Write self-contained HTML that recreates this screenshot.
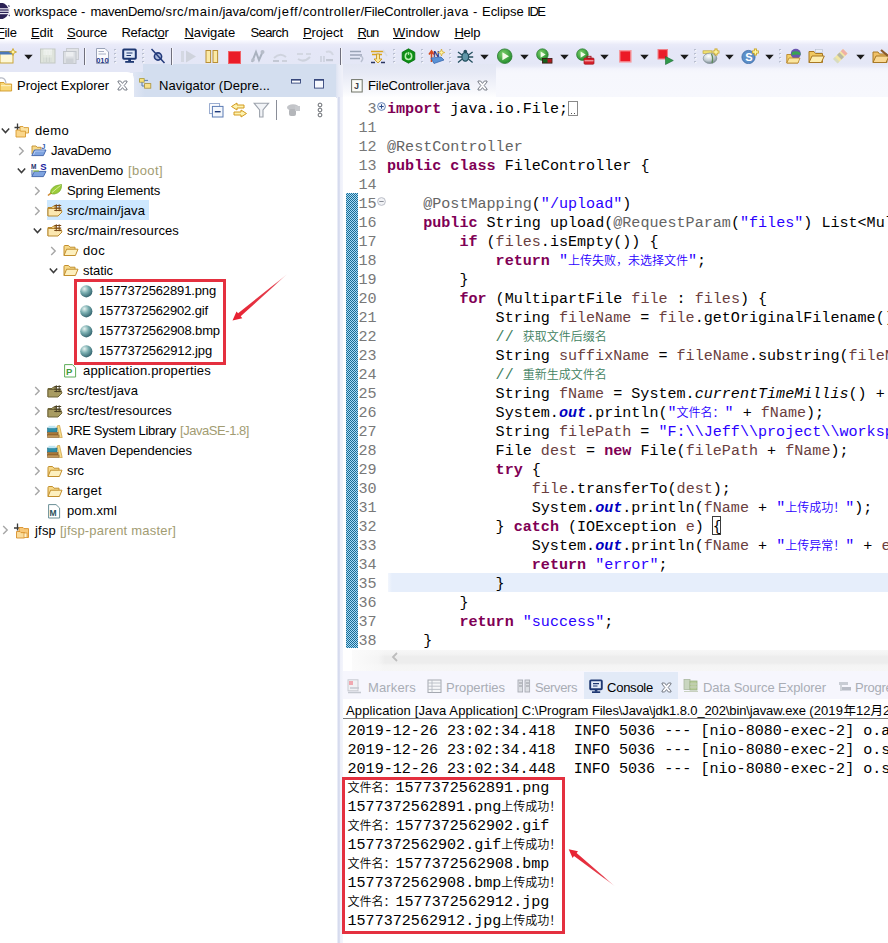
<!DOCTYPE html>
<html lang="zh"><head><meta charset="utf-8"><title>workspace - Eclipse IDE</title>
<style>
html,body{margin:0;padding:0;background:#fff;}
#root{position:relative;width:888px;height:943px;overflow:hidden;background:#fff;font-family:"Liberation Sans","Noto Sans CJK SC",sans-serif;}
.t{position:absolute;white-space:pre;line-height:20px;height:20px;}
.b{position:absolute;display:block;}
.m{font-family:"Liberation Mono","Noto Sans CJK SC",monospace;font-size:15.08px;}
.c{line-height:12px;font-weight:350;font-family:"Liberation Mono","Noto Sans CJK SC",monospace;font-size:12px;}
.cl{position:absolute;left:387px;white-space:pre;height:19px;line-height:19px;color:#000;}
.ln{position:absolute;left:340px;width:36.5px;text-align:right;white-space:pre;height:19px;line-height:19px;color:#787878;}
.k{color:#7f0055;font-weight:bold;}
.s{color:#2a00ff;}
.a{color:#646464;}
.v{color:#6a3e3e;}
.cm{color:#3f7f5f;}
.sf{color:#0000c0;font-style:italic;font-weight:bold;}
.si{font-style:italic;}
u{text-decoration:underline;}
</style></head>
<body>
<div id="root">
<div class="b" style="left:0px;top:40px;width:888px;height:25px;background:linear-gradient(#fbfbff,#eaebf9 18%,#e5e7f7 36%,#e4e7f6);"></div>
<div class="b" style="left:0px;top:64px;width:143px;height:9px;background:#e4e7f6;"></div>
<div class="b" style="left:143px;top:64px;width:193px;height:33px;background:#d3deef;"></div>
<div class="b" style="left:133px;top:72px;width:12px;height:25px;background:linear-gradient(90deg,#e0e6f4,#d3deef);"></div>
<div class="b" style="left:0px;top:72px;width:134px;height:26px;background:#fff;border-radius:0 7px 0 0;"></div>
<div class="b" style="left:0px;top:97px;width:336px;height:846px;background:#fff;"></div>
<div class="b" style="left:336px;top:64px;width:7px;height:34px;background:linear-gradient(90deg,#dde3f2,#e9ecf7 40%,#f1f2fa);"></div>
<div class="b" style="left:337px;top:97px;width:6px;height:846px;background:linear-gradient(90deg,#f4f5fb 0,#d6dbee 1.5px,#dde1f1 3px,#eef0f9 3.5px,#f4f5fc);"></div>
<div class="b" style="left:343px;top:64px;width:545px;height:33px;background:linear-gradient(#e5e8f6 0,#e8eaf7 2px,#f3f4fc 5px,#f6f7fd 9px,#f7f8fd);"></div>
<div class="b" style="left:343px;top:64px;width:153px;height:34px;background:linear-gradient(#e2e6f3,#e6e9f5 25%,#f7f8fc 80%,#fff);"></div>
<div class="b" style="left:343px;top:97px;width:545px;height:568px;background:#fff;"></div>
<div class="b" style="left:343px;top:671px;width:545px;height:272px;background:#fff;"></div>
<div class="b" style="left:343px;top:671px;width:545px;height:28px;background:#f6f6fd;"></div>
<div class="b" style="left:584px;top:672px;width:94px;height:27px;background:#e2eaf7;"></div>
<div class="t" style="left:14px;top:2px;font-size:13px;color:#000;letter-spacing:0.125px;">workspace </div>
<div class="t" style="left:81px;top:2px;font-size:13px;color:#000;letter-spacing:0.779px;">- </div>
<div class="t" style="left:90.5px;top:2px;font-size:13px;color:#000;letter-spacing:-0.300px;">mavenDemo</div>
<div class="t" style="left:161.5px;top:2px;font-size:13px;color:#000;letter-spacing:0.390px;">/src</div>
<div class="t" style="left:184px;top:2px;font-size:13px;color:#000;letter-spacing:0.642px;">/main</div>
<div class="t" style="left:219px;top:2px;font-size:13px;color:#000;letter-spacing:-0.092px;">/java</div>
<div class="t" style="left:246px;top:2px;font-size:13px;color:#000;letter-spacing:-0.143px;">/com</div>
<div class="t" style="left:273.6px;top:2px;font-size:13px;color:#000;letter-spacing:0.856px;">/jeff</div>
<div class="t" style="left:298.6px;top:2px;font-size:13px;color:#000;letter-spacing:0.429px;">/controller</div>
<div class="t" style="left:360.4px;top:2px;font-size:13px;color:#000;letter-spacing:-0.121px;">/FileController</div>
<div class="t" style="left:439.5px;top:2px;font-size:13px;color:#000;letter-spacing:0.405px;">.java </div>
<div class="t" style="left:473px;top:2px;font-size:13px;color:#000;letter-spacing:0.529px;">- </div>
<div class="t" style="left:482px;top:2px;font-size:13px;color:#000;letter-spacing:-0.028px;">Eclipse </div>
<div class="t" style="left:527.3px;top:2px;font-size:13px;color:#000;letter-spacing:-1.491px;">IDE</div>
<div class="t" style="left:-3px;top:23px;font-size:13px;color:#000;letter-spacing:-0.362px;"><u>F</u>ile</div>
<div class="t" style="left:31px;top:23px;font-size:13px;color:#000;letter-spacing:-0.101px;"><u>E</u>dit</div>
<div class="t" style="left:67px;top:23px;font-size:13px;color:#000;letter-spacing:-0.199px;"><u>S</u>ource</div>
<div class="t" style="left:121.4px;top:23px;font-size:13px;color:#000;letter-spacing:-0.229px;">Refact<u>o</u>r</div>
<div class="t" style="left:184.5px;top:23px;font-size:13px;color:#000;letter-spacing:-0.101px;"><u>N</u>avigate</div>
<div class="t" style="left:250.5px;top:23px;font-size:13px;color:#000;letter-spacing:-0.616px;">Search</div>
<div class="t" style="left:303px;top:23px;font-size:13px;color:#000;letter-spacing:-0.066px;"><u>P</u>roject</div>
<div class="t" style="left:357.6px;top:23px;font-size:13px;color:#000;letter-spacing:-1.050px;"><u>R</u>un</div>
<div class="t" style="left:393px;top:23px;font-size:13px;color:#000;letter-spacing:0.094px;"><u>W</u>indow</div>
<div class="t" style="left:454.4px;top:23px;font-size:13px;color:#000;letter-spacing:-0.210px;"><u>H</u>elp</div>
<div class="t" style="left:17px;top:76px;font-size:13px;color:#000;letter-spacing:-0.030px;">Project Explorer</div>
<div class="t" style="left:159px;top:76px;font-size:13px;color:#000;letter-spacing:0.062px;">Navigator (Depre...</div>
<div class="b" style="left:47px;top:200px;width:102px;height:20px;background:#cde8ff;"></div>
<div class="t" style="left:35px;top:121px;font-size:13px;color:#000;letter-spacing:0.370px;">demo</div>
<div class="t" style="left:51px;top:141px;font-size:13px;color:#000;letter-spacing:-0.268px;">JavaDemo</div>
<div class="t" style="left:51px;top:161px;font-size:13px;color:#000;letter-spacing:-0.189px;">mavenDemo</div>
<div class="t" style="left:128px;top:161px;font-size:13px;color:#a29c72;letter-spacing:0.412px;">[boot]</div>
<div class="t" style="left:67px;top:181px;font-size:13px;color:#000;letter-spacing:-0.159px;">Spring Elements</div>
<div class="t" style="left:67px;top:201px;font-size:13px;color:#000;letter-spacing:0.109px;">src/main/java</div>
<div class="t" style="left:67px;top:221px;font-size:13px;color:#000;letter-spacing:0.121px;">src/main/resources</div>
<div class="t" style="left:83px;top:241px;font-size:13px;color:#000;letter-spacing:0.346px;">doc</div>
<div class="t" style="left:83px;top:261px;font-size:13px;color:#000;letter-spacing:-0.057px;">static</div>
<div class="t" style="left:99px;top:281px;font-size:13px;color:#000;letter-spacing:-0.135px;">1577372562891.png</div>
<div class="t" style="left:99px;top:301px;font-size:13px;color:#000;letter-spacing:-0.138px;">1577372562902.gif</div>
<div class="t" style="left:99px;top:321px;font-size:13px;color:#000;letter-spacing:-0.112px;">1577372562908.bmp</div>
<div class="t" style="left:99px;top:341px;font-size:13px;color:#000;letter-spacing:-0.115px;">1577372562912.jpg</div>
<div class="t" style="left:83px;top:361px;font-size:13px;color:#000;letter-spacing:0.201px;">application.properties</div>
<div class="t" style="left:67px;top:381px;font-size:13px;color:#000;letter-spacing:0.127px;">src/test/java</div>
<div class="t" style="left:67px;top:401px;font-size:13px;color:#000;letter-spacing:0.134px;">src/test/resources</div>
<div class="t" style="left:67px;top:421px;font-size:13px;color:#000;letter-spacing:-0.326px;">JRE System Library</div>
<div class="t" style="left:180px;top:421px;font-size:13px;color:#a29c72;letter-spacing:-0.452px;">[JavaSE-1.8]</div>
<div class="t" style="left:67px;top:441px;font-size:13px;color:#000;letter-spacing:-0.042px;">Maven Dependencies</div>
<div class="t" style="left:67px;top:461px;font-size:13px;color:#000;letter-spacing:-0.110px;">src</div>
<div class="t" style="left:67px;top:481px;font-size:13px;color:#000;letter-spacing:0.293px;">target</div>
<div class="t" style="left:67px;top:501px;font-size:13px;color:#000;letter-spacing:0.126px;">pom.xml</div>
<div class="t" style="left:35px;top:521px;font-size:13px;color:#000;letter-spacing:0.192px;">jfsp</div>
<div class="t" style="left:60px;top:521px;font-size:13px;color:#a29c72;letter-spacing:0.200px;">[jfsp-parent master]</div>
<svg class="b" style="left:0px;top:3px" width="10" height="16" viewBox="0 0 10 16"><circle cx="0.5" cy="8" r="8.3" fill="#2c2255"/><rect x="0" y="5.2" width="10" height="1.2" fill="#e8e6f0"/><rect x="0" y="7.6" width="10" height="1.2" fill="#e8e6f0"/><rect x="0" y="10" width="10" height="1.2" fill="#e8e6f0"/><path d="M8.2 2.5 L9.6 3.5 M8.8 13 L9.8 12" stroke="#55507a" stroke-width="1.2"/></svg>
<svg class="b" style="left:0px;top:48px" width="17" height="16" viewBox="0 0 17 16"><rect x="0" y="3.5" width="13" height="11.5" fill="#fdf8d8" stroke="#c9a63a" stroke-width="1"/><rect x="0" y="3.5" width="13" height="3" fill="#4b78b8"/><path d="M13 0.5 L14 3 L16.5 4 L14 5 L13 7.5 L12 5 L9.5 4 L12 3 Z" fill="#fff6a0" stroke="#c9a020" stroke-width="0.8"/></svg>
<svg class="b" style="left:23.5px;top:54px" width="9" height="6" viewBox="0 0 9 6"><polygon points="0.3,0.8 8.7,0.8 4.5,5.4" fill="#1a1a1a"/></svg>
<svg class="b" style="left:40px;top:48px" width="16" height="16" viewBox="0 0 16 16"><rect x="0.5" y="1" width="14.5" height="14" fill="#dfe4dc" stroke="#c3c9c4"/><rect x="3.5" y="1.5" width="8.5" height="5.5" fill="#eef1ee"/><rect x="3.5" y="9.5" width="8.5" height="5.5" fill="#cfd5d0"/><path d="M5 3 V14 M8 3 V14 M11 3 V14" stroke="#e7ece6" stroke-width="1"/></svg>
<svg class="b" style="left:63px;top:48px" width="18" height="16" viewBox="0 0 18 16"><rect x="3.5" y="0.5" width="12" height="11" fill="#e1e3e6" stroke="#c9ccd2"/><rect x="0.5" y="3.5" width="12.5" height="12" fill="#dcdfe3" stroke="#c2c6cc"/><rect x="3" y="4" width="7.5" height="4.5" fill="#eceef0"/><rect x="3" y="10.5" width="7.5" height="5" fill="#cdd1d6"/></svg>
<div class="b" style="left:84px;top:48px;width:1px;height:17px;background:#6f6f7c;"></div>
<div class="b" style="left:85px;top:48px;width:1px;height:17px;background:#f7f7fc;"></div>
<svg class="b" style="left:95px;top:48px" width="16" height="16" viewBox="0 0 16 16"><path d="M1.5 0.5 H10 L13.5 4 V15.5 H1.5 Z" fill="#fbfbfd" stroke="#9aa3b8"/><path d="M3.5 3.5 H9 M3.5 6 H11" stroke="#a8b0c4"/><text x="1.2" y="14.6" font-family="Liberation Sans,sans-serif" font-size="7.5" font-weight="bold" fill="#273a8a">010</text></svg>
<svg class="b" style="left:114px;top:48px" width="3" height="16" viewBox="0 0 3 16"><rect x="0" y="1" width="2" height="1.5" fill="#b9bfd0"/><rect x="1" y="2.2" width="1.5" height="1" fill="#fff"/><rect x="0" y="5" width="2" height="1.5" fill="#b9bfd0"/><rect x="1" y="6.2" width="1.5" height="1" fill="#fff"/><rect x="0" y="9" width="2" height="1.5" fill="#b9bfd0"/><rect x="1" y="10.2" width="1.5" height="1" fill="#fff"/><rect x="0" y="13" width="2" height="1.5" fill="#b9bfd0"/><rect x="1" y="14.2" width="1.5" height="1" fill="#fff"/></svg>
<svg class="b" style="left:122px;top:48px" width="15" height="16" viewBox="0 0 15 16"><rect x="1.2" y="1.6" width="12.6" height="9.2" rx="0.8" fill="#dfe9f8" stroke="#1e3872" stroke-width="2"/><path d="M4.5 5 H10.5 M4.5 7.5 H9" stroke="#1e3872" stroke-width="1.2"/><rect x="6.2" y="11" width="2.8" height="2.5" fill="#1e3872"/><rect x="3.2" y="13" width="8.8" height="1.8" fill="#1e3872"/></svg>
<svg class="b" style="left:142px;top:48px" width="3" height="16" viewBox="0 0 3 16"><rect x="0" y="1" width="2" height="1.5" fill="#b9bfd0"/><rect x="1" y="2.2" width="1.5" height="1" fill="#fff"/><rect x="0" y="5" width="2" height="1.5" fill="#b9bfd0"/><rect x="1" y="6.2" width="1.5" height="1" fill="#fff"/><rect x="0" y="9" width="2" height="1.5" fill="#b9bfd0"/><rect x="1" y="10.2" width="1.5" height="1" fill="#fff"/><rect x="0" y="13" width="2" height="1.5" fill="#b9bfd0"/><rect x="1" y="14.2" width="1.5" height="1" fill="#fff"/></svg>
<svg class="b" style="left:150px;top:48px" width="16" height="16" viewBox="0 0 16 16"><circle cx="8" cy="8.5" r="3.6" fill="#aab9dc" stroke="#22397a" stroke-width="1.6"/><path d="M1.5 1 L14.5 15" stroke="#22397a" stroke-width="1.5"/></svg>
<div class="b" style="left:171px;top:48px;width:1px;height:17px;background:#6f6f7c;"></div>
<div class="b" style="left:172px;top:48px;width:1px;height:17px;background:#f7f7fc;"></div>
<svg class="b" style="left:178px;top:48px" width="19" height="16" viewBox="0 0 19 16"><rect x="3" y="3" width="3" height="11" fill="#d4d8e2"/><polygon points="8,2.5 18,8.5 8,14.5" fill="#cfd3dc"/></svg>
<svg class="b" style="left:205px;top:48px" width="14" height="16" viewBox="0 0 14 16"><rect x="1" y="2.5" width="4.6" height="12" fill="#fbe9a6" stroke="#b98f34"/><rect x="8" y="2.5" width="4.6" height="12" fill="#fbe9a6" stroke="#b98f34"/></svg>
<svg class="b" style="left:228px;top:48px" width="14" height="16" viewBox="0 0 14 16"><rect x="0.5" y="3.5" width="12" height="12" fill="#ea1c28" stroke="#f0646a"/></svg>
<svg class="b" style="left:250px;top:48px" width="16" height="16" viewBox="0 0 16 16"><path d="M2 14 L6 4 L9 12 L13 3" stroke="#aab2bf" stroke-width="2" fill="none"/><circle cx="12.5" cy="4" r="2" fill="#b7bdc9"/><circle cx="3" cy="12" r="1.8" fill="#b7bdc9"/></svg>
<svg class="b" style="left:272px;top:48px" width="18" height="16" viewBox="0 0 18 16"><path d="M2 10 Q8 4 14 9" stroke="#cfd3de" stroke-width="2" fill="none"/><rect x="1" y="12" width="6" height="2" fill="#c3c8d4"/><rect x="10" y="12" width="5" height="2" fill="#cdd1dc"/></svg>
<svg class="b" style="left:295px;top:48px" width="18" height="16" viewBox="0 0 18 16"><path d="M2 6 H8 M11 6 H16" stroke="#d3d7e2" stroke-width="2"/><path d="M3 11 Q9 15 15 9" stroke="#cdd2dd" stroke-width="2" fill="none"/></svg>
<svg class="b" style="left:318px;top:48px" width="18" height="16" viewBox="0 0 18 16"><path d="M8 4 Q13 2 15 7" stroke="#d3d7e2" stroke-width="2" fill="none"/><path d="M3 8 V14 M6 8 V14" stroke="#c6cbd8" stroke-width="1.3"/><rect x="8" y="11" width="7" height="2.2" fill="#c3c8d4"/></svg>
<div class="b" style="left:340px;top:48px;width:1px;height:17px;background:#6f6f7c;"></div>
<div class="b" style="left:341px;top:48px;width:1px;height:17px;background:#f7f7fc;"></div>
<svg class="b" style="left:348px;top:48px" width="18" height="16" viewBox="0 0 18 16"><path d="M2 3.5 H13 M2 7 H14 M2 10.5 H12" stroke="#9aa3b6" stroke-width="1.6"/><path d="M12 8 Q17 9 13 14" stroke="#b9c0d0" stroke-width="1.5" fill="none"/></svg>
<svg class="b" style="left:370px;top:48px" width="19" height="16" viewBox="0 0 19 16"><path d="M1 3.5 H14 M2 6.5 H12" stroke="#d9a520" stroke-width="1.5"/><path d="M6.5 6 V11 H4 L8 15 L12 11 H9.5 V6 Z" fill="#fbe9a0" stroke="#c9961e" stroke-width="0.9"/><path d="M1 14.5 H5 M11 14.5 H15" stroke="#2a3560" stroke-width="1.6"/><path d="M13 2 L17 8" stroke="#d8dce6" stroke-width="1.5"/></svg>
<svg class="b" style="left:393px;top:48px" width="3" height="16" viewBox="0 0 3 16"><rect x="0" y="1" width="2" height="1.5" fill="#b9bfd0"/><rect x="1" y="2.2" width="1.5" height="1" fill="#fff"/><rect x="0" y="5" width="2" height="1.5" fill="#b9bfd0"/><rect x="1" y="6.2" width="1.5" height="1" fill="#fff"/><rect x="0" y="9" width="2" height="1.5" fill="#b9bfd0"/><rect x="1" y="10.2" width="1.5" height="1" fill="#fff"/><rect x="0" y="13" width="2" height="1.5" fill="#b9bfd0"/><rect x="1" y="14.2" width="1.5" height="1" fill="#fff"/></svg>
<svg class="b" style="left:401px;top:48px" width="15" height="16" viewBox="0 0 15 16"><polygon points="7.5,0.8 13.8,4.3 13.8,11.7 7.5,15.2 1.2,11.7 1.2,4.3" fill="#0c8f14" stroke="#087010" stroke-width="0.8"/><circle cx="7.5" cy="8.3" r="3.2" fill="none" stroke="#b8f0b0" stroke-width="1.5"/><rect x="6.8" y="3.5" width="1.5" height="4.3" fill="#b8f0b0" stroke="#0c8f14" stroke-width="0.6"/></svg>
<svg class="b" style="left:421px;top:48px" width="3" height="16" viewBox="0 0 3 16"><rect x="0" y="1" width="2" height="1.5" fill="#b9bfd0"/><rect x="1" y="2.2" width="1.5" height="1" fill="#fff"/><rect x="0" y="5" width="2" height="1.5" fill="#b9bfd0"/><rect x="1" y="6.2" width="1.5" height="1" fill="#fff"/><rect x="0" y="9" width="2" height="1.5" fill="#b9bfd0"/><rect x="1" y="10.2" width="1.5" height="1" fill="#fff"/><rect x="0" y="13" width="2" height="1.5" fill="#b9bfd0"/><rect x="1" y="14.2" width="1.5" height="1" fill="#fff"/></svg>
<svg class="b" style="left:428px;top:48px" width="17" height="16" viewBox="0 0 17 16"><path d="M3.5 14 V4 M1 6.5 L3.5 3 L6 6.5" stroke="#d4491e" stroke-width="1.6" fill="none"/><text x="5.2" y="8.6" font-family="Liberation Sans,sans-serif" font-size="8.5" font-weight="bold" fill="#2a2f70">N</text><polygon points="3,10 13,9 16,12 6,15.5" fill="#5a92d6" stroke="#2d5fa6" stroke-width="0.7"/><path d="M13.5 1 L14.3 3.6 L16.8 4.5 L14.3 5.5 L13.5 8 L12.6 5.5 L10.2 4.5 L12.6 3.6 Z" fill="#fff7a8" stroke="#d0a422" stroke-width="0.7"/></svg>
<svg class="b" style="left:449px;top:48px" width="3" height="16" viewBox="0 0 3 16"><rect x="0" y="1" width="2" height="1.5" fill="#b9bfd0"/><rect x="1" y="2.2" width="1.5" height="1" fill="#fff"/><rect x="0" y="5" width="2" height="1.5" fill="#b9bfd0"/><rect x="1" y="6.2" width="1.5" height="1" fill="#fff"/><rect x="0" y="9" width="2" height="1.5" fill="#b9bfd0"/><rect x="1" y="10.2" width="1.5" height="1" fill="#fff"/><rect x="0" y="13" width="2" height="1.5" fill="#b9bfd0"/><rect x="1" y="14.2" width="1.5" height="1" fill="#fff"/></svg>
<svg class="b" style="left:457px;top:48px" width="17" height="16" viewBox="0 0 17 16"><ellipse cx="8.3" cy="8.8" rx="3.3" ry="4.4" fill="#5f97a8" stroke="#24505f" stroke-width="1.2"/><circle cx="8.3" cy="3.6" r="1.8" fill="#24505f"/><path d="M1 4 L5 7 M15.6 4 L11.6 7 M0.5 9 H5 M11.6 9 H16.2 M1 14.5 L5.2 11 M15.6 14.5 L11.4 11" stroke="#24505f" stroke-width="1.3"/></svg>
<svg class="b" style="left:479.5px;top:54px" width="9" height="6" viewBox="0 0 9 6"><polygon points="0.3,0.8 8.7,0.8 4.5,5.4" fill="#1a1a1a"/></svg>
<svg class="b" style="left:497px;top:48px" width="16" height="16" viewBox="0 0 16 16"><defs><radialGradient id="gr1" cx="40%" cy="35%" r="70%"><stop offset="0" stop-color="#7ccf6a"/><stop offset="1" stop-color="#1f8a2a"/></radialGradient></defs><circle cx="7.7" cy="8.2" r="7.3" fill="url(#gr1)" stroke="#2a7a30" stroke-width="0.8"/><polygon points="5.4,4.2 12,8.2 5.4,12.3" fill="#f4fbe8"/></svg>
<svg class="b" style="left:520px;top:54px" width="9" height="6" viewBox="0 0 9 6"><polygon points="0.3,0.8 8.7,0.8 4.5,5.4" fill="#1a1a1a"/></svg>
<svg class="b" style="left:536px;top:48px" width="17" height="16" viewBox="0 0 17 16"><circle cx="6.4" cy="6.6" r="5.8" fill="url(#gr1)" stroke="#2a7a30" stroke-width="0.7"/><polygon points="4.6,3.4 9.6,6.6 4.6,9.8" fill="#f0fae6"/><rect x="6.5" y="10.5" width="9.5" height="4.6" fill="#17601c" stroke="#3a1010" stroke-width="0.8"/><rect x="11.5" y="11" width="4.2" height="3.6" fill="#b01822"/></svg>
<svg class="b" style="left:559.5px;top:54px" width="9" height="6" viewBox="0 0 9 6"><polygon points="0.3,0.8 8.7,0.8 4.5,5.4" fill="#1a1a1a"/></svg>
<svg class="b" style="left:576px;top:48px" width="19" height="17" viewBox="0 0 19 17"><circle cx="6.4" cy="6.6" r="5.8" fill="url(#gr1)" stroke="#2a7a30" stroke-width="0.7"/><polygon points="4.6,3.4 9.6,6.6 4.6,9.8" fill="#f0fae6"/><rect x="8" y="10" width="10" height="6.2" rx="1" fill="#d8202a" stroke="#a0141c" stroke-width="0.7"/><rect x="11" y="8.3" width="4" height="2" fill="none" stroke="#a0141c" stroke-width="0.9"/><rect x="8.5" y="12.3" width="9" height="1" fill="#f6c4c6"/></svg>
<svg class="b" style="left:599.5px;top:54px" width="9" height="6" viewBox="0 0 9 6"><polygon points="0.3,0.8 8.7,0.8 4.5,5.4" fill="#1a1a1a"/></svg>
<svg class="b" style="left:618px;top:48px" width="15" height="16" viewBox="0 0 15 16"><rect x="1" y="2" width="12.6" height="12.6" fill="#f59aa0"/><rect x="2.4" y="3.4" width="9.8" height="9.8" fill="#ec1a26"/></svg>
<svg class="b" style="left:639.5px;top:54px" width="9" height="6" viewBox="0 0 9 6"><polygon points="0.3,0.8 8.7,0.8 4.5,5.4" fill="#1a1a1a"/></svg>
<svg class="b" style="left:657px;top:48px" width="17" height="17" viewBox="0 0 17 17"><rect x="0.5" y="1" width="10.5" height="10.5" fill="#f08088"/><rect x="1.6" y="2.1" width="8.3" height="8.3" fill="#ea1e2a"/><polygon points="8.5,8.5 16.3,12.5 8.5,16.5" fill="#2f9a4a" stroke="#1c6a34" stroke-width="0.6"/></svg>
<svg class="b" style="left:679.8px;top:54px" width="9" height="6" viewBox="0 0 9 6"><polygon points="0.3,0.8 8.7,0.8 4.5,5.4" fill="#1a1a1a"/></svg>
<svg class="b" style="left:694px;top:48px" width="3" height="16" viewBox="0 0 3 16"><rect x="0" y="1" width="2" height="1.5" fill="#b9bfd0"/><rect x="1" y="2.2" width="1.5" height="1" fill="#fff"/><rect x="0" y="5" width="2" height="1.5" fill="#b9bfd0"/><rect x="1" y="6.2" width="1.5" height="1" fill="#fff"/><rect x="0" y="9" width="2" height="1.5" fill="#b9bfd0"/><rect x="1" y="10.2" width="1.5" height="1" fill="#fff"/><rect x="0" y="13" width="2" height="1.5" fill="#b9bfd0"/><rect x="1" y="14.2" width="1.5" height="1" fill="#fff"/></svg>
<svg class="b" style="left:702px;top:48px" width="18" height="16" viewBox="0 0 18 16"><defs><radialGradient id="gs1" cx="40%" cy="30%" r="75%"><stop offset="0" stop-color="#ffffff"/><stop offset="0.55" stop-color="#c4ced4"/><stop offset="1" stop-color="#6f8088"/></radialGradient></defs><rect x="1" y="2.8" width="9" height="2.6" fill="#f0e070" stroke="#b9a030" stroke-width="0.6"/><ellipse cx="8" cy="10.3" rx="6.8" ry="5.2" fill="url(#gs1)" stroke="#7e8c92" stroke-width="0.7"/><path d="M9.5 6 Q11.5 10 10 15" stroke="#5d8a5a" stroke-width="1.3" fill="none"/><path d="M14 0.6 V7.4 M10.6 4 H17.4" stroke="#c9a41e" stroke-width="3"/><path d="M14 1.4 V6.6 M11.4 4 H16.6" stroke="#fff8a8" stroke-width="1.4"/></svg>
<svg class="b" style="left:725.1px;top:54px" width="9" height="6" viewBox="0 0 9 6"><polygon points="0.3,0.8 8.7,0.8 4.5,5.4" fill="#1a1a1a"/></svg>
<svg class="b" style="left:741px;top:48px" width="19" height="16" viewBox="0 0 19 16"><circle cx="7.5" cy="9" r="6.6" fill="#5c8fc8" stroke="#3a6aa6" stroke-width="0.8"/><text x="4.3" y="13" font-family="Liberation Sans,sans-serif" font-size="11" font-weight="bold" fill="#fff">S</text><path d="M14.4 0.6 V7.4 M11 4 H17.8" stroke="#c9a41e" stroke-width="3"/><path d="M14.4 1.4 V6.6 M11.8 4 H17" stroke="#fff8a8" stroke-width="1.4"/></svg>
<svg class="b" style="left:765px;top:54px" width="9" height="6" viewBox="0 0 9 6"><polygon points="0.3,0.8 8.7,0.8 4.5,5.4" fill="#1a1a1a"/></svg>
<svg class="b" style="left:779px;top:48px" width="3" height="16" viewBox="0 0 3 16"><rect x="0" y="1" width="2" height="1.5" fill="#b9bfd0"/><rect x="1" y="2.2" width="1.5" height="1" fill="#fff"/><rect x="0" y="5" width="2" height="1.5" fill="#b9bfd0"/><rect x="1" y="6.2" width="1.5" height="1" fill="#fff"/><rect x="0" y="9" width="2" height="1.5" fill="#b9bfd0"/><rect x="1" y="10.2" width="1.5" height="1" fill="#fff"/><rect x="0" y="13" width="2" height="1.5" fill="#b9bfd0"/><rect x="1" y="14.2" width="1.5" height="1" fill="#fff"/></svg>
<svg class="b" style="left:786px;top:48px" width="17" height="16" viewBox="0 0 17 16"><path d="M0.8 15 V6.5 H5 L6.5 8 H12 V15 Z" fill="#f4cf6a" stroke="#b9862a" stroke-width="0.9"/><circle cx="9.8" cy="5.8" r="5" fill="#6a55b0"/><path d="M6 4 Q10 2.2 14.3 4.4 L14.6 7 Q10 5.6 5.6 7.4 Z" fill="#3aa352"/><path d="M0.8 15 L3 10 H14 L12 15 Z" fill="#fbe6a0" stroke="#b9862a" stroke-width="0.8"/></svg>
<svg class="b" style="left:808px;top:48px" width="17" height="16" viewBox="0 0 17 16"><path d="M1 14.5 V3.5 H6 L7.5 5.5 H14.5 V14.5 Z" fill="#f0c860" stroke="#a87824" stroke-width="1"/><rect x="7.5" y="1.5" width="7" height="3" fill="#e8eef6" stroke="#b0b8c8" stroke-width="0.5"/><path d="M1 14.5 L4 8 H16.3 L13.3 14.5 Z" fill="#fdeeb0" stroke="#a87824" stroke-width="1"/></svg>
<svg class="b" style="left:832px;top:48px" width="17" height="16" viewBox="0 0 17 16"><polygon points="11,1 15.5,5.5 6,15 1.5,10.5" fill="#f2e7a2"/><polygon points="11,1 15.5,5.5 13.3,7.7 8.8,3.2" fill="#f0b0a6"/><polygon points="7.5,4.5 12,9 9.5,11.5 5,7" fill="#b9b9a4"/><polygon points="3,9 7.5,13.5 5.5,15.5 1,11" fill="#d8dcc0"/></svg>
<svg class="b" style="left:855.5px;top:54px" width="9" height="6" viewBox="0 0 9 6"><polygon points="0.3,0.8 8.7,0.8 4.5,5.4" fill="#1a1a1a"/></svg>
<svg class="b" style="left:872px;top:48px" width="17" height="16" viewBox="0 0 17 16"><path d="M1 14.5 V4 H6 L7.5 6 H15 V14.5 Z" fill="#f0c068" stroke="#a87824" stroke-width="1"/><path d="M1 14.5 L4 8 H17 L14 14.5 Z" fill="#f9d894" stroke="#a87824" stroke-width="1"/><path d="M9 2 L16 8" stroke="#8a5a2a" stroke-width="2.2"/></svg>
<svg class="b" style="left:1px;top:126.5px" width="9" height="8" viewBox="0 0 9 8"><path d="M0.8 1.6 L4.5 5.6 L8.2 1.6" fill="none" stroke="#3c3c3c" stroke-width="1.5"/></svg>
<svg class="b" style="left:13px;top:123px" width="17" height="15" viewBox="0 0 17 15"><path d="M4.5 0.5 V7 M1.5 4.5 H7" stroke="#3a3a3a" stroke-width="1.3"/><path d="M7 3.5 H10 L11 4.6 H15.5 V10 H7 Z" fill="#fbe2a2" stroke="#d89a30" stroke-width="0.9"/><path d="M3 7 H6.5 L7.5 8.2 H12.5 V14 H3 Z" fill="#fad68a" stroke="#d89a30" stroke-width="0.9"/></svg>
<svg class="b" style="left:18.4px;top:146px" width="7" height="10" viewBox="0 0 7 10"><path d="M1.2 1 L5.2 5 L1.2 9" fill="none" stroke="#a6a6a6" stroke-width="1.4"/></svg>
<svg class="b" style="left:31px;top:143px" width="16" height="14" viewBox="0 0 16 14"><path d="M1 11 V3 H5 L6.2 4.3 H10 V6.3" fill="#f6d98a" stroke="#c3902e" stroke-width="0.9"/><path d="M0.8 12.6 L3.4 7 H15 L12.4 12.6 Z" fill="#7fa4e0" stroke="#3b5fa8" stroke-width="0.9"/><path d="M2.5 11.8 L4.2 8 H13.5" stroke="#c8dafa" stroke-width="0.8" fill="none"/><text x="10.2" y="6.2" font-family="Liberation Sans,sans-serif" font-size="7.5" font-weight="bold" fill="#3a5fb0">J</text></svg>
<svg class="b" style="left:17px;top:166.5px" width="9" height="8" viewBox="0 0 9 8"><path d="M0.8 1.6 L4.5 5.6 L8.2 1.6" fill="none" stroke="#3c3c3c" stroke-width="1.5"/></svg>
<svg class="b" style="left:31px;top:162px" width="16" height="16" viewBox="0 0 16 16"><text x="0" y="6.6" font-family="Liberation Sans,sans-serif" font-size="6.5" font-weight="bold" fill="#1e2f6a">M</text><text x="9.2" y="8" font-family="Liberation Sans,sans-serif" font-size="9.5" font-weight="bold" fill="#1a22a0">S</text><path d="M1 8 V13.5" stroke="#3b5fa8" stroke-width="1"/><path d="M0.8 14.6 L3.4 9.4 H15 L12.4 14.6 Z" fill="#7fa4e0" stroke="#3b5fa8" stroke-width="0.9"/><path d="M2 9 H8" stroke="#8ab84a" stroke-width="1.2"/></svg>
<svg class="b" style="left:34.4px;top:186px" width="7" height="10" viewBox="0 0 7 10"><path d="M1.2 1 L5.2 5 L1.2 9" fill="none" stroke="#a6a6a6" stroke-width="1.4"/></svg>
<svg class="b" style="left:47px;top:183px" width="16" height="14" viewBox="0 0 16 14"><path d="M1 12.5 Q3 10.5 5 10" stroke="#d08a30" stroke-width="1.6" fill="none"/><path d="M3.5 10 Q3 3 14.5 1.5 Q15 9.5 7.5 11 Q5 11.4 3.5 10 Z" fill="#9ccc3a" stroke="#6fa822" stroke-width="0.7"/><path d="M5 9.5 Q9 6 13.5 2.5" stroke="#d6ee9a" stroke-width="1" fill="none"/></svg>
<svg class="b" style="left:34.4px;top:206px" width="7" height="10" viewBox="0 0 7 10"><path d="M1.2 1 L5.2 5 L1.2 9" fill="none" stroke="#a6a6a6" stroke-width="1.4"/></svg>
<svg class="b" style="left:47px;top:203.5px" width="16" height="13" viewBox="0 0 16 13"><path d="M1 12 V3.5 H5 L6 2.2 H10" fill="#f4d58a" stroke="#b98a30" stroke-width="1"/><path d="M1 12 V4.5 H13.5 L15 8 L11 12 Z" fill="#fbe7b0" stroke="#b98a30" stroke-width="1"/><path d="M7.3 1.5 H14.2 M7.3 4 H14.2 M7.3 6.5 H14.2 M9.3 0.3 V7.2 M12.2 0.3 V7.2" stroke="#7a4a1a" stroke-width="1"/></svg>
<svg class="b" style="left:33px;top:226.5px" width="9" height="8" viewBox="0 0 9 8"><path d="M0.8 1.6 L4.5 5.6 L8.2 1.6" fill="none" stroke="#3c3c3c" stroke-width="1.5"/></svg>
<svg class="b" style="left:47px;top:223.5px" width="16" height="13" viewBox="0 0 16 13"><path d="M1 12 V3.5 H5 L6 2.2 H10" fill="#f4d58a" stroke="#b98a30" stroke-width="1"/><path d="M1 12 V4.5 H13.5 L15 8 L11 12 Z" fill="#fbe7b0" stroke="#b98a30" stroke-width="1"/><path d="M7.3 1.5 H14.2 M7.3 4 H14.2 M7.3 6.5 H14.2 M9.3 0.3 V7.2 M12.2 0.3 V7.2" stroke="#7a4a1a" stroke-width="1"/></svg>
<svg class="b" style="left:50.4px;top:246px" width="7" height="10" viewBox="0 0 7 10"><path d="M1.2 1 L5.2 5 L1.2 9" fill="none" stroke="#a6a6a6" stroke-width="1.4"/></svg>
<svg class="b" style="left:63px;top:243.5px" width="16" height="13" viewBox="0 0 16 13"><path d="M1 11.5 V2.5 Q1 1.5 2 1.5 H5.5 L7 3.2 H12 V5.2" fill="#f6d98a" stroke="#c3902e" stroke-width="1"/><path d="M1 11.5 L3.6 5.2 H15 L12.4 11.5 Z" fill="#fdf0bf" stroke="#c3902e" stroke-width="1"/></svg>
<svg class="b" style="left:49px;top:266.5px" width="9" height="8" viewBox="0 0 9 8"><path d="M0.8 1.6 L4.5 5.6 L8.2 1.6" fill="none" stroke="#3c3c3c" stroke-width="1.5"/></svg>
<svg class="b" style="left:63px;top:263.5px" width="16" height="13" viewBox="0 0 16 13"><path d="M1 11.5 V2.5 Q1 1.5 2 1.5 H5.5 L7 3.2 H12 V5.2" fill="#f6d98a" stroke="#c3902e" stroke-width="1"/><path d="M1 11.5 L3.6 5.2 H15 L12.4 11.5 Z" fill="#fdf0bf" stroke="#c3902e" stroke-width="1"/></svg>
<svg class="b" style="left:80px;top:285.2px" width="12.6" height="12.6" viewBox="0 0 12.6 12.6"><defs><radialGradient id="bg291" cx="35%" cy="30%" r="75%"><stop offset="0" stop-color="#e8f4f2"/><stop offset="0.45" stop-color="#7aaeb0"/><stop offset="1" stop-color="#2f5f6a"/></radialGradient></defs><circle cx="6.3" cy="6.3" r="6.1" fill="url(#bg291)"/></svg>
<svg class="b" style="left:80px;top:305.2px" width="12.6" height="12.6" viewBox="0 0 12.6 12.6"><defs><radialGradient id="bg311" cx="35%" cy="30%" r="75%"><stop offset="0" stop-color="#e8f4f2"/><stop offset="0.45" stop-color="#7aaeb0"/><stop offset="1" stop-color="#2f5f6a"/></radialGradient></defs><circle cx="6.3" cy="6.3" r="6.1" fill="url(#bg311)"/></svg>
<svg class="b" style="left:80px;top:325.2px" width="12.6" height="12.6" viewBox="0 0 12.6 12.6"><defs><radialGradient id="bg331" cx="35%" cy="30%" r="75%"><stop offset="0" stop-color="#e8f4f2"/><stop offset="0.45" stop-color="#7aaeb0"/><stop offset="1" stop-color="#2f5f6a"/></radialGradient></defs><circle cx="6.3" cy="6.3" r="6.1" fill="url(#bg331)"/></svg>
<svg class="b" style="left:80px;top:345.2px" width="12.6" height="12.6" viewBox="0 0 12.6 12.6"><defs><radialGradient id="bg351" cx="35%" cy="30%" r="75%"><stop offset="0" stop-color="#e8f4f2"/><stop offset="0.45" stop-color="#7aaeb0"/><stop offset="1" stop-color="#2f5f6a"/></radialGradient></defs><circle cx="6.3" cy="6.3" r="6.1" fill="url(#bg351)"/></svg>
<svg class="b" style="left:64px;top:364px" width="13" height="14" viewBox="0 0 13 14"><path d="M0.6 0.6 H8.5 L11.6 3.8 V13 H0.6 Z" fill="#fff" stroke="#5fae5a" stroke-width="1"/><text x="2" y="10.6" font-family="Liberation Sans,sans-serif" font-size="9.5" font-weight="bold" fill="#3f9a3c">P</text></svg>
<svg class="b" style="left:34.4px;top:386px" width="7" height="10" viewBox="0 0 7 10"><path d="M1.2 1 L5.2 5 L1.2 9" fill="none" stroke="#a6a6a6" stroke-width="1.4"/></svg>
<svg class="b" style="left:47px;top:384.5px" width="16" height="13" viewBox="0 0 16 13"><path d="M1 12 V3.5 H5 L6 2.2 H10" fill="#9a8f58" stroke="#6e6438" stroke-width="1"/><path d="M1 12 V4.5 H13.5 L15 8 L11 12 Z" fill="#a89c62" stroke="#6e6438" stroke-width="1"/><path d="M7.3 1.5 H14.2 M7.3 4 H14.2 M7.3 6.5 H14.2 M9.3 0.3 V7.2 M12.2 0.3 V7.2" stroke="#4a4226" stroke-width="1"/></svg>
<svg class="b" style="left:34.4px;top:406px" width="7" height="10" viewBox="0 0 7 10"><path d="M1.2 1 L5.2 5 L1.2 9" fill="none" stroke="#a6a6a6" stroke-width="1.4"/></svg>
<svg class="b" style="left:47px;top:404.5px" width="16" height="13" viewBox="0 0 16 13"><path d="M1 12 V3.5 H5 L6 2.2 H10" fill="#9a8f58" stroke="#6e6438" stroke-width="1"/><path d="M1 12 V4.5 H13.5 L15 8 L11 12 Z" fill="#a89c62" stroke="#6e6438" stroke-width="1"/><path d="M7.3 1.5 H14.2 M7.3 4 H14.2 M7.3 6.5 H14.2 M9.3 0.3 V7.2 M12.2 0.3 V7.2" stroke="#4a4226" stroke-width="1"/></svg>
<svg class="b" style="left:34.4px;top:426px" width="7" height="10" viewBox="0 0 7 10"><path d="M1.2 1 L5.2 5 L1.2 9" fill="none" stroke="#a6a6a6" stroke-width="1.4"/></svg>
<svg class="b" style="left:47px;top:424.5px" width="16" height="13" viewBox="0 0 16 13"><polygon points="10,1 12.5,0.3 15.2,12.6 12.3,12.6" fill="#f6dc8c" stroke="#c89a3a" stroke-width="0.7"/><rect x="0.5" y="3" width="9.5" height="4" fill="#2f8fa8" stroke="#1f6f88" stroke-width="0.6"/><rect x="1.5" y="0.8" width="7" height="2.4" fill="#bfe6f2"/><rect x="0.5" y="7.4" width="10.5" height="2.6" fill="#a87838" stroke="#7a5220" stroke-width="0.5"/><rect x="0.5" y="10" width="11.5" height="2.6" fill="#c49858" stroke="#7a5220" stroke-width="0.5"/></svg>
<svg class="b" style="left:34.4px;top:446px" width="7" height="10" viewBox="0 0 7 10"><path d="M1.2 1 L5.2 5 L1.2 9" fill="none" stroke="#a6a6a6" stroke-width="1.4"/></svg>
<svg class="b" style="left:47px;top:444.5px" width="16" height="13" viewBox="0 0 16 13"><polygon points="10,1 12.5,0.3 15.2,12.6 12.3,12.6" fill="#f6dc8c" stroke="#c89a3a" stroke-width="0.7"/><rect x="0.5" y="3" width="9.5" height="4" fill="#2f8fa8" stroke="#1f6f88" stroke-width="0.6"/><rect x="1.5" y="0.8" width="7" height="2.4" fill="#bfe6f2"/><rect x="0.5" y="7.4" width="10.5" height="2.6" fill="#a87838" stroke="#7a5220" stroke-width="0.5"/><rect x="0.5" y="10" width="11.5" height="2.6" fill="#c49858" stroke="#7a5220" stroke-width="0.5"/></svg>
<svg class="b" style="left:34.4px;top:466px" width="7" height="10" viewBox="0 0 7 10"><path d="M1.2 1 L5.2 5 L1.2 9" fill="none" stroke="#a6a6a6" stroke-width="1.4"/></svg>
<svg class="b" style="left:47px;top:464.5px" width="16" height="13" viewBox="0 0 16 13"><path d="M1 11.5 V2.5 Q1 1.5 2 1.5 H5.5 L7 3.2 H12 V5.2" fill="#f6d98a" stroke="#c3902e" stroke-width="1"/><path d="M1 11.5 L3.6 5.2 H15 L12.4 11.5 Z" fill="#fdf0bf" stroke="#c3902e" stroke-width="1"/></svg>
<svg class="b" style="left:34.4px;top:486px" width="7" height="10" viewBox="0 0 7 10"><path d="M1.2 1 L5.2 5 L1.2 9" fill="none" stroke="#a6a6a6" stroke-width="1.4"/></svg>
<svg class="b" style="left:47px;top:484.5px" width="16" height="13" viewBox="0 0 16 13"><path d="M1 11.5 V2.5 Q1 1.5 2 1.5 H5.5 L7 3.2 H12 V5.2" fill="#f6d98a" stroke="#c3902e" stroke-width="1"/><path d="M1 11.5 L3.6 5.2 H15 L12.4 11.5 Z" fill="#fdf0bf" stroke="#c3902e" stroke-width="1"/></svg>
<svg class="b" style="left:48px;top:504px" width="13" height="15" viewBox="0 0 13 15"><path d="M0.6 0.6 H8 L11.6 4 V14 H0.6 Z" fill="#fff" stroke="#6a8f96" stroke-width="1"/><text x="1.4" y="11.8" font-family="Liberation Sans,sans-serif" font-size="8.5" font-weight="bold" fill="#2a4f5c">M</text></svg>
<svg class="b" style="left:1.9px;top:525px" width="7" height="10" viewBox="0 0 7 10"><path d="M1.2 1 L5.2 5 L1.2 9" fill="none" stroke="#a6a6a6" stroke-width="1.4"/></svg>
<svg class="b" style="left:13px;top:523px" width="17" height="16" viewBox="0 0 17 16"><path d="M4.5 0.5 V7.5 M1 5 H7" stroke="#3a3a3a" stroke-width="1.3"/><path d="M6 4.5 H10 L11 5.6 H15.5 V14.5 H6 Z" fill="#f8c878" stroke="#d8902a" stroke-width="0.9"/><path d="M3.5 8.5 H7 L8 9.6 H11.5 V15 H3.5 Z" fill="#fbdc9a" stroke="#d8902a" stroke-width="0.9"/><rect x="11" y="10" width="3" height="4.5" fill="#fff3d0" stroke="#d8902a" stroke-width="0.7"/></svg>
<svg class="b" style="left:0px;top:76px" width="13" height="16" viewBox="0 0 13 16"><path d="M0 2 Q5 1 6 7" stroke="#b8bcc6" stroke-width="1.3" fill="none"/><path d="M0 6.5 H4 L5.2 8 H11.6 V15 H0 Z" fill="#f8d878" stroke="#d0982a" stroke-width="0.9"/><rect x="1" y="9" width="10" height="1.2" fill="#fdeeb8"/></svg>
<svg class="b" style="left:117px;top:79.5px" width="11" height="11" viewBox="0 0 11 11"><path d="M1 1 H3.6 L5.5 3.4 L7.4 1 H10 V2 L7.2 5.5 L10 9 V10 H7.4 L5.5 7.6 L3.6 10 H1 V9 L3.8 5.5 L1 2 Z" fill="#fdfdfe" stroke="#6a6f7a" stroke-width="0.9"/></svg>
<svg class="b" style="left:139px;top:78px" width="13" height="12" viewBox="0 0 13 12"><rect x="0.6" y="0.6" width="4.6" height="3.6" fill="#f8e27a" stroke="#a89a3a" stroke-width="0.8"/><path d="M3 4.2 V8 H6" stroke="#5a7aa8" stroke-width="1" fill="none"/><rect x="5.6" y="5.6" width="6.2" height="4.6" fill="#f8e08a" stroke="#a8903a" stroke-width="0.8"/><path d="M5.2 2.4 H9" stroke="#5a7aa8" stroke-width="1"/></svg>
<svg class="b" style="left:291px;top:79px" width="10" height="5" viewBox="0 0 10 5"><rect x="0.5" y="0.5" width="9" height="3.6" fill="#fbfcfe" stroke="#34457a" stroke-width="0.9"/><rect x="0.2" y="0.2" width="9.6" height="1.4" fill="#34457a"/></svg>
<svg class="b" style="left:314px;top:79px" width="10" height="10" viewBox="0 0 10 10"><rect x="0.5" y="0.5" width="9" height="8.6" fill="#f6f8fd" stroke="#34457a" stroke-width="0.9"/><rect x="0.2" y="0.2" width="9.6" height="1.5" fill="#34457a"/></svg>
<svg class="b" style="left:209px;top:103px" width="16" height="15" viewBox="0 0 16 15"><rect x="0.6" y="0.6" width="10" height="10" fill="#fff" stroke="#8aa0c8" stroke-width="0.9"/><rect x="3.4" y="3.4" width="10.6" height="10.6" fill="#f4f7fc" stroke="#5a7ab4" stroke-width="1"/><path d="M5.8 8.7 H11.6" stroke="#1e3a7a" stroke-width="1.4"/></svg>
<svg class="b" style="left:230px;top:102px" width="18" height="16" viewBox="0 0 18 16"><path d="M7 1 L1.5 4.5 L7 8 V6 H14 V3 H7 Z" fill="#fdf3b0" stroke="#d39a1e" stroke-width="1"/><path d="M11 8 L16.5 11.5 L11 15 V13 H4 V10 H11 Z" fill="#fdf3b0" stroke="#d39a1e" stroke-width="1"/></svg>
<svg class="b" style="left:253px;top:102px" width="17" height="16" viewBox="0 0 17 16"><path d="M1 1.2 H15.6 L10 8 V15 H6.6 V8 Z" fill="#f2f4f7" stroke="#9ca2ac" stroke-width="1.1"/></svg>
<div class="b" style="left:276px;top:100px;width:1px;height:20px;background:#8a8e98;"></div>
<svg class="b" style="left:285px;top:103px" width="17" height="15" viewBox="0 0 17 15"><ellipse cx="8" cy="4.5" rx="6" ry="3.2" fill="#c2c4c8"/><rect x="4" y="6" width="7" height="7" rx="2" fill="#b4b6ba"/><rect x="10" y="3" width="5" height="5" fill="#c8cace"/></svg>
<svg class="b" style="left:317px;top:102px" width="6" height="16" viewBox="0 0 6 16"><circle cx="3" cy="3" r="1.9" fill="#fff" stroke="#55585f" stroke-width="0.9"/><circle cx="3" cy="8" r="1.9" fill="#fff" stroke="#55585f" stroke-width="0.9"/><circle cx="3" cy="13" r="1.9" fill="#fff" stroke="#55585f" stroke-width="0.9"/></svg>
<div class="t" style="left:368px;top:76px;font-size:13px;color:#000;letter-spacing:-0.108px;">FileController.java</div>
<div class="b" style="left:346px;top:193px;width:12px;height:455px;background:repeating-conic-gradient(#1d6c90 0% 25%, #a4dafa 0% 50%) 0 0/2px 2px;"></div>
<div class="b" style="left:388px;top:573px;width:500px;height:19px;background:linear-gradient(90deg,#f2f6fd,#e6eefb 4px);"></div>
<div class="b" style="left:352px;top:650px;width:536px;height:21px;background:linear-gradient(#f7f7f7,#f3f3f3 20%,#ededed 32%,#ededed 62%,#f4f4f4 72%,#f6f6f6);"></div>
<div class="b" style="left:352px;top:650px;width:33px;height:21px;background:linear-gradient(90deg,#fbfbfb,rgba(248,248,248,0.7) 80%,rgba(248,248,248,0));"></div>
<svg class="b" style="left:391px;top:652px" width="8" height="10" viewBox="0 0 8 10"><path d="M6 1 L2 5 L6 9" fill="none" stroke="#bdbdbd" stroke-width="1.8"/></svg>
<div class="ln m" style="top:100px">3</div>
<div class="cl m" style="top:100px"><span class="k">import</span> java.io.File;<span style="display:inline-block;width:8px;height:13px;border:1px solid #8a8a8a;vertical-align:-3px;margin-left:0.5px;position:relative"><span style="position:absolute;left:2px;bottom:1px;width:1px;height:1px;background:#555"></span><span style="position:absolute;left:5px;bottom:1px;width:1px;height:1px;background:#555"></span></span></div>
<div class="ln m" style="top:119px">11</div>
<div class="cl m" style="top:119px"></div>
<div class="ln m" style="top:138px">12</div>
<div class="cl m" style="top:138px"><span class="a">@RestController</span></div>
<div class="ln m" style="top:157px">13</div>
<div class="cl m" style="top:157px"><span class="k">public</span> <span class="k">class</span> FileController {</div>
<div class="ln m" style="top:176px">14</div>
<div class="cl m" style="top:176px"></div>
<div class="ln m" style="top:195px">15</div>
<div class="cl m" style="top:195px">    <span class="a">@PostMapping</span>(<span class="s">&quot;/upload&quot;</span>)</div>
<div class="ln m" style="top:214px">16</div>
<div class="cl m" style="top:214px">    <span class="k">public</span> String upload(<span class="a">@RequestParam</span>(<span class="s">&quot;files&quot;</span>) List&lt;MultipartFile&gt; <span class="v">files</span>) {</div>
<div class="ln m" style="top:233px">17</div>
<div class="cl m" style="top:233px">        <span class="k">if</span> (<span class="v">files</span>.isEmpty()) {</div>
<div class="ln m" style="top:252px">18</div>
<div class="cl m" style="top:252px">            <span class="k">return</span> <span class="s">"<span class="c">上传失败，未选择文件</span>"</span>;</div>
<div class="ln m" style="top:271px">19</div>
<div class="cl m" style="top:271px">        }</div>
<div class="ln m" style="top:290px">20</div>
<div class="cl m" style="top:290px">        <span class="k">for</span> (MultipartFile <span class="v">file</span> : <span class="v">files</span>) {</div>
<div class="ln m" style="top:309px">21</div>
<div class="cl m" style="top:309px">            String <span class="v">fileName</span> = <span class="v">file</span>.getOriginalFilename();</div>
<div class="ln m" style="top:328px">22</div>
<div class="cl m" style="top:328px">            <span class="cm">// <span class="c">获取文件后缀名</span></span></div>
<div class="ln m" style="top:347px">23</div>
<div class="cl m" style="top:347px">            String <span class="v">suffixName</span> = <span class="v">fileName</span>.substring(<span class="v">fileName</span>.lastIndexOf("."));</div>
<div class="ln m" style="top:366px">24</div>
<div class="cl m" style="top:366px">            <span class="cm">// <span class="c">重新生成文件名</span></span></div>
<div class="ln m" style="top:385px">25</div>
<div class="cl m" style="top:385px">            String <span class="v">fName</span> = System.<span class="si">currentTimeMillis</span>() + <span class="v">suffixName</span>;</div>
<div class="ln m" style="top:404px">26</div>
<div class="cl m" style="top:404px">            System.<span class="sf">out</span>.println(<span class="s">"<span class="c">文件名：</span>"</span> + <span class="v">fName</span>);</div>
<div class="ln m" style="top:423px">27</div>
<div class="cl m" style="top:423px">            String <span class="v">filePath</span> = <span class="s">&quot;F:\\Jeff\\project\\workspace\\mavenDemo\\src\\main\\resources\\static\\&quot;</span>;</div>
<div class="ln m" style="top:442px">28</div>
<div class="cl m" style="top:442px">            File <span class="v">dest</span> = <span class="k">new</span> File(<span class="v">filePath</span> + <span class="v">fName</span>);</div>
<div class="ln m" style="top:461px">29</div>
<div class="cl m" style="top:461px">            <span class="k">try</span> {</div>
<div class="ln m" style="top:480px">30</div>
<div class="cl m" style="top:480px">                <span class="v">file</span>.transferTo(<span class="v">dest</span>);</div>
<div class="ln m" style="top:499px">31</div>
<div class="cl m" style="top:499px">                System.<span class="sf">out</span>.println(<span class="v">fName</span> + <span class="s">"<span class="c">上传成功！</span>"</span>);</div>
<div class="ln m" style="top:518px">32</div>
<div class="cl m" style="top:518px">            } <span class="k">catch</span> (IOException <span class="v">e</span>) <span style="position:relative">{<span style="position:absolute;left:-0.5px;top:-2px;width:7px;height:17px;border:1px solid #3c3c3c"></span></span></div>
<div class="ln m" style="top:537px">33</div>
<div class="cl m" style="top:537px">                System.<span class="sf">out</span>.println(<span class="v">fName</span> + <span class="s">"<span class="c">上传异常！</span>"</span> + <span class="v">e</span>.getMessage());</div>
<div class="ln m" style="top:556px">34</div>
<div class="cl m" style="top:556px">                <span class="k">return</span> <span class="s">&quot;error&quot;</span>;</div>
<div class="ln m" style="top:575px">35</div>
<div class="cl m" style="top:575px">            }</div>
<div class="ln m" style="top:594px">36</div>
<div class="cl m" style="top:594px">        }</div>
<div class="ln m" style="top:613px">37</div>
<div class="cl m" style="top:613px">        <span class="k">return</span> <span class="s">&quot;success&quot;</span>;</div>
<div class="ln m" style="top:632px">38</div>
<div class="cl m" style="top:632px">    }</div>
<div class="t" style="left:368px;top:678px;font-size:13px;color:#a9adb5;letter-spacing:0.150px;">Markers</div>
<div class="t" style="left:446px;top:678px;font-size:13px;color:#a9adb5;letter-spacing:-0.025px;">Properties</div>
<div class="t" style="left:535px;top:678px;font-size:13px;color:#a9adb5;letter-spacing:-0.399px;">Servers</div>
<div class="t" style="left:607px;top:678px;font-size:13px;color:#000;letter-spacing:-0.243px;">Console</div>
<div class="t" style="left:703px;top:678px;font-size:13px;color:#a9adb5;letter-spacing:-0.064px;">Data Source Explorer</div>
<div class="t" style="left:855px;top:678px;font-size:13px;color:#a9adb5;letter-spacing:-0.253px;">Progress</div>
<div class="t" style="left:346px;top:700.5px;font-size:13px;color:#000;letter-spacing:0.122px;">Application [Java Application] </div>
<div class="t" style="left:521.8px;top:700.5px;font-size:13px;color:#000;letter-spacing:0.011px;">C:\Program </div>
<div class="t" style="left:592px;top:700.5px;font-size:13px;color:#000;letter-spacing:-0.120px;">Files\Java\jdk1.8.0_202\bin\javaw.exe </div>
<div class="t" style="left:809.3px;top:700.5px;font-size:13px;color:#000;letter-spacing:0.090px;">(2019</div>
<div class="t" style="left:843.5px;top:700.5px;font-size:12.5px;color:#000;">年<span style="font-size:13px">12</span>月<span style="font-size:13px">26</span>日 下午11:02:10)</div>
<div class="b" style="left:343px;top:718px;width:545px;height:1px;background:#7c7c7c;"></div>
<div class="cl m" style="left:347.5px;top:722px">2019-12-26 23:02:34.418  INFO 5036 --- [nio-8080-exec-2] o.a.c.c.C.[Tomcat].[localhost].[/]</div>
<div class="cl m" style="left:347.5px;top:741px">2019-12-26 23:02:34.418  INFO 5036 --- [nio-8080-exec-2] o.s.web.servlet.DispatcherServlet</div>
<div class="cl m" style="left:347.5px;top:760px">2019-12-26 23:02:34.448  INFO 5036 --- [nio-8080-exec-2] o.s.web.servlet.DispatcherServlet</div>
<div class="cl m" style="left:347.5px;top:779px"><span class="c">文件名：</span>1577372562891.png</div>
<div class="cl m" style="left:347.5px;top:798px">1577372562891.png<span class="c">上传成功！</span></div>
<div class="cl m" style="left:347.5px;top:817px"><span class="c">文件名：</span>1577372562902.gif</div>
<div class="cl m" style="left:347.5px;top:836px">1577372562902.gif<span class="c">上传成功！</span></div>
<div class="cl m" style="left:347.5px;top:855px"><span class="c">文件名：</span>1577372562908.bmp</div>
<div class="cl m" style="left:347.5px;top:874px">1577372562908.bmp<span class="c">上传成功！</span></div>
<div class="cl m" style="left:347.5px;top:893px"><span class="c">文件名：</span>1577372562912.jpg</div>
<div class="cl m" style="left:347.5px;top:912px">1577372562912.jpg<span class="c">上传成功！</span></div>
<svg class="b" style="left:351px;top:79px" width="12" height="14" viewBox="0 0 12 14"><rect x="0.6" y="0.6" width="10.6" height="12.4" fill="#fbfcf8" stroke="#707468" stroke-width="1"/><text x="3" y="10.4" font-family="Liberation Sans,sans-serif" font-size="9" font-weight="bold" fill="#3a3f4a">J</text></svg>
<svg class="b" style="left:477px;top:79.5px" width="11" height="11" viewBox="0 0 11 11"><path d="M1 1 H3.6 L5.5 3.4 L7.4 1 H10 V2 L7.2 5.5 L10 9 V10 H7.4 L5.5 7.6 L3.6 10 H1 V9 L3.8 5.5 L1 2 Z" fill="#fdfdfe" stroke="#6a6f7a" stroke-width="0.9"/></svg>
<svg class="b" style="left:377px;top:102px" width="9" height="9" viewBox="0 0 9 9"><circle cx="4.5" cy="4.5" r="3.9" fill="#eef4fc" stroke="#5a7ab0" stroke-width="0.9"/><path d="M2.3 4.5 H6.7 M4.5 2.3 V6.7" stroke="#2a4a8a" stroke-width="1"/></svg>
<svg class="b" style="left:377px;top:197px" width="9" height="9" viewBox="0 0 9 9"><circle cx="4.5" cy="4.5" r="3.9" fill="#f2f3f6" stroke="#b4b8c2" stroke-width="0.9"/><path d="M2.3 4.5 H6.7" stroke="#8a8e98" stroke-width="1"/></svg>
<svg class="b" style="left:347px;top:679px" width="15" height="15" viewBox="0 0 15 15"><rect x="1" y="0.8" width="10" height="11" fill="#f0f1f4" stroke="#c8cbd2" stroke-width="1"/><rect x="2" y="2" width="4" height="4" fill="#f0a8b0"/><path d="M1 13.5 H14 M3 9 H12" stroke="#c4c8d0" stroke-width="1.3"/></svg>
<svg class="b" style="left:427px;top:679px" width="15" height="15" viewBox="0 0 15 15"><rect x="1" y="1" width="13" height="12.5" fill="#f6f7f9" stroke="#a4a8b0" stroke-width="1"/><path d="M1 4 H14 M5 1 V13.5 M1 7.2 H14 M1 10.4 H14" stroke="#b8bcc4" stroke-width="0.9"/></svg>
<svg class="b" style="left:517px;top:679px" width="14" height="15" viewBox="0 0 14 15"><rect x="1" y="1" width="4.6" height="12" fill="#dcdfe4" stroke="#a8acb4" stroke-width="0.9"/><rect x="8" y="1" width="4.6" height="12" fill="#dcdfe4" stroke="#a8acb4" stroke-width="0.9"/><path d="M2 4 H5 M2 7 H5 M9 4 H12 M9 7 H12" stroke="#8e929a" stroke-width="0.9"/></svg>
<svg class="b" style="left:589px;top:679px" width="14" height="15" viewBox="0 0 14 15"><rect x="1.2" y="1.4" width="11.6" height="8.8" rx="0.8" fill="#e4ecf8" stroke="#1e3872" stroke-width="1.9"/><path d="M4 4.6 H10 M4 7 H8.5" stroke="#1e3872" stroke-width="1.1"/><rect x="5.8" y="10.4" width="2.6" height="2.3" fill="#1e3872"/><rect x="3" y="12.3" width="8.2" height="1.7" fill="#1e3872"/></svg>
<svg class="b" style="left:661px;top:681.5px" width="11" height="11" viewBox="0 0 11 11"><path d="M1 1 H3.6 L5.5 3.4 L7.4 1 H10 V2 L7.2 5.5 L10 9 V10 H7.4 L5.5 7.6 L3.6 10 H1 V9 L3.8 5.5 L1 2 Z" fill="#fdfdfe" stroke="#6a6f7a" stroke-width="0.9"/></svg>
<svg class="b" style="left:683px;top:678px" width="16" height="16" viewBox="0 0 16 16"><rect x="1" y="1.5" width="6" height="10" fill="#c9d6c0" stroke="#aab8a0" stroke-width="0.8"/><rect x="7" y="3" width="7" height="9" fill="#b8cc9c" stroke="#9ab080" stroke-width="0.8"/><path d="M1 13.5 H15 M7 6 H14 M7 9 H14" stroke="#c8d0c0" stroke-width="1.2"/></svg>
<svg class="b" style="left:838px;top:680px" width="14" height="13" viewBox="0 0 14 13"><rect x="1" y="2" width="9" height="3" fill="#c8ccd4"/><rect x="3" y="7" width="10" height="3.5" fill="#b8bcc6"/><rect x="2" y="5" width="2" height="6" fill="#d0d4da"/></svg>
<div class="b" style="left:74px;top:279px;width:146px;height:80px;border:3px solid #e4303f;"></div>
<div class="b" style="left:342px;top:777px;width:217px;height:151px;border:3px solid #e4303f;"></div>
<svg class="b" style="left:225px;top:265px" width="70" height="65" viewBox="0 0 70 65"><defs><linearGradient id="ag1" gradientUnits="userSpaceOnUse" x1="62.3" y1="9" x2="7.5" y2="55.6"><stop offset="0" stop-color="#e4303f" stop-opacity="0.15"/><stop offset="0.25" stop-color="#e02a3a" stop-opacity="0.9"/><stop offset="1" stop-color="#e82030"/></linearGradient></defs><polygon points="62.3,9 13.1,48.3 11.5,46.4 7.5,55.6 17.3,53.2 15.7,51.3" fill="url(#ag1)"/></svg>
<svg class="b" style="left:560px;top:835px" width="70" height="65" viewBox="0 0 70 65"><defs><linearGradient id="ag2" gradientUnits="userSpaceOnUse" x1="55.2" y1="51.6" x2="8.7" y2="14.2"><stop offset="0" stop-color="#e4303f" stop-opacity="0.15"/><stop offset="0.25" stop-color="#e02a3a" stop-opacity="0.9"/><stop offset="1" stop-color="#e82030"/></linearGradient></defs><polygon points="55.2,51.6 16.6,17.9 18,16.2 8.7,14.2 12.6,22.9 14,21.1" fill="url(#ag2)"/></svg>
</div>
</body></html>
